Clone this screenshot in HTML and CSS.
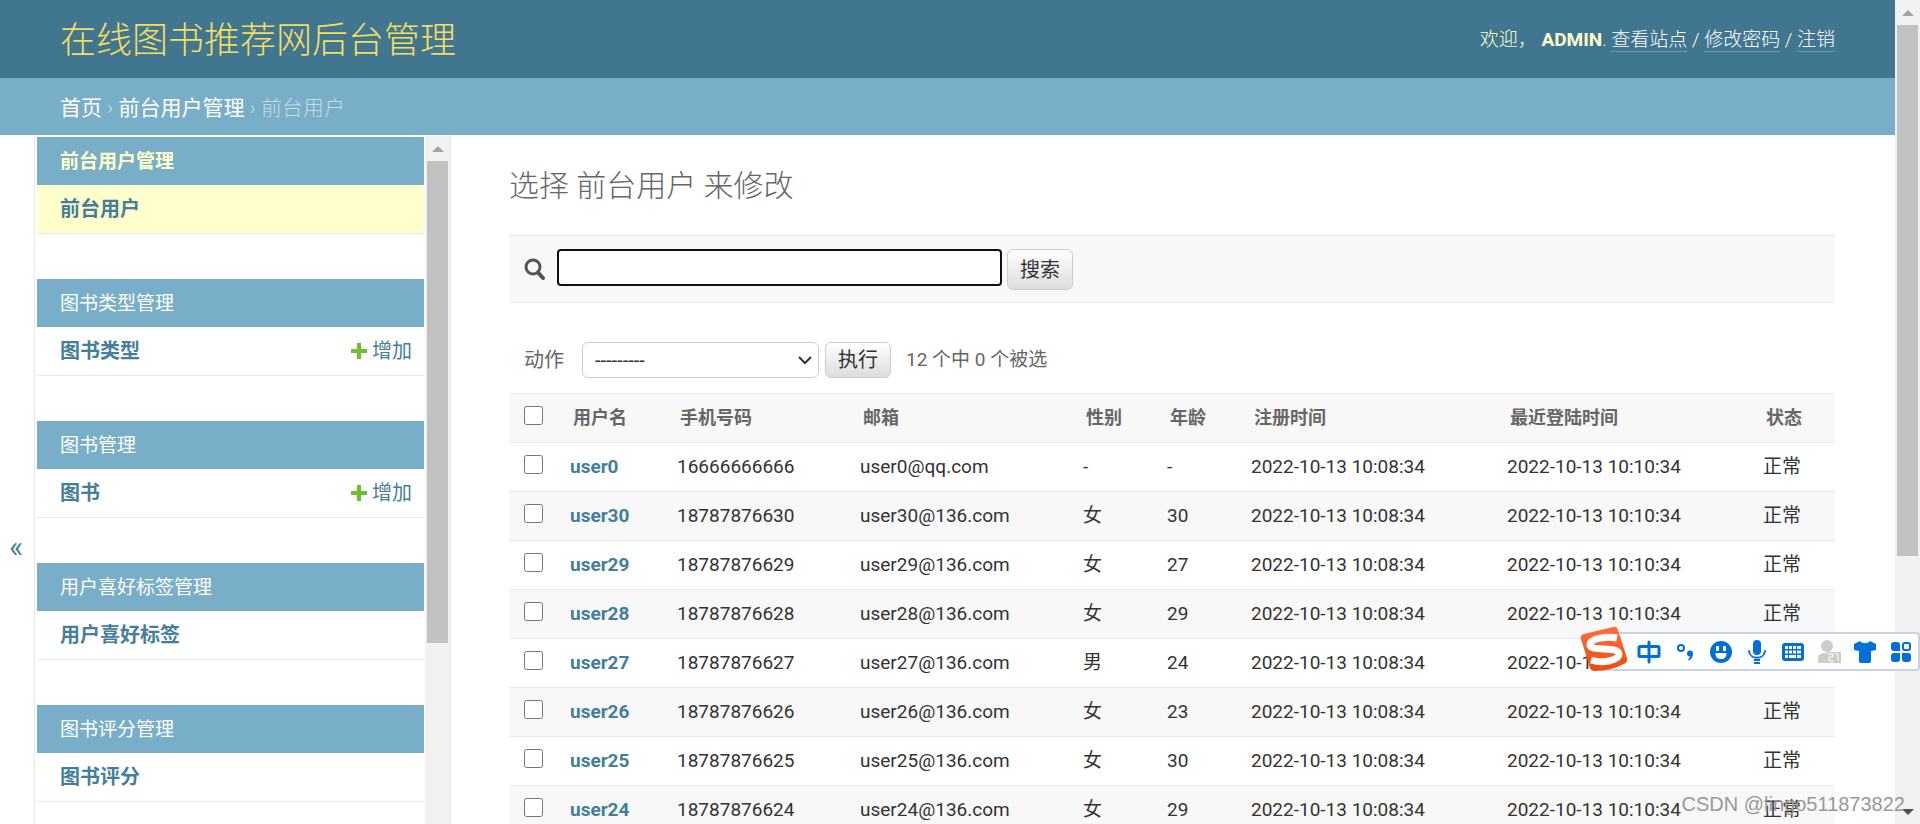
FILE: index.html
```html
<!DOCTYPE html>
<html lang="zh-CN">
<head>
<meta charset="utf-8">
<title>选择 前台用户 来修改 | 在线图书推荐网后台管理</title>
<link rel="stylesheet" href="styles.css">
</head>
<body>
<div class="page">
  <header class="header">
    <h1 class="branding"><a href="#">在线图书推荐网后台管理</a></h1>
    <div class="user-tools">欢迎， <strong>ADMIN</strong>. <a href="#">查看站点</a> / <a href="#">修改密码</a> / <a href="#">注销</a></div>
  </header>
  <nav class="breadcrumbs"><a href="#">首页</a> › <a href="#">前台用户管理</a> › 前台用户</nav>
  <div class="main">
    <button class="toggle" type="button" aria-label="切换导航">«</button>
    <nav class="sidebar">
      <div class="modules">
        <section class="module current">
          <h2><a href="#">前台用户管理</a></h2>
          <div class="model"><a class="name" href="#">前台用户</a></div>
        </section>
        <section class="module">
          <h2><a href="#">图书类型管理</a></h2>
          <div class="model"><a class="name" href="#">图书类型</a><a class="add" href="#"><svg viewBox="0 0 16 16"><path d="M6 0h4v6h6v4h-6v6H6v-6H0V6h6z"/></svg>增加</a></div>
        </section>
        <section class="module">
          <h2><a href="#">图书管理</a></h2>
          <div class="model"><a class="name" href="#">图书</a><a class="add" href="#"><svg viewBox="0 0 16 16"><path d="M6 0h4v6h6v4h-6v6H6v-6H0V6h6z"/></svg>增加</a></div>
        </section>
        <section class="module">
          <h2><a href="#">用户喜好标签管理</a></h2>
          <div class="model"><a class="name" href="#">用户喜好标签</a></div>
        </section>
        <section class="module">
          <h2><a href="#">图书评分管理</a></h2>
          <div class="model"><a class="name" href="#">图书评分</a></div>
        </section>
      </div>
      <div class="scrollbar side-scroll"><span class="arrow up"></span><span class="thumb"></span></div>
    </nav>
    <main class="content">
      <h2 class="title">选择 前台用户 来修改</h2>
      <form class="toolbar">
        <label for="searchbar" aria-label="搜索"><svg viewBox="0 0 21 22"><circle cx="9" cy="9" r="7" fill="none" stroke="#555" stroke-width="3"/><path d="M14 14.500l5 5.500" stroke="#555" stroke-width="4" stroke-linecap="round"/></svg></label>
        <input class="search" type="text" id="searchbar">
        <button class="btn" type="button">搜索</button>
      </form>
      <form class="changelist">
        <div class="actions">
          <label for="action">动作</label>
          <select id="action"><option>---------</option></select>
          <button class="btn" type="button">执行</button>
          <span class="counter">12 个中 0 个被选</span>
        </div>
        <table class="results">
          <colgroup><col class="c-check"><col class="c-user"><col class="c-phone"><col class="c-mail"><col class="c-small"><col class="c-small"><col class="c-time"><col class="c-time"><col class="c-small"></colgroup>
          <thead>
            <tr><th><input type="checkbox" aria-label="全选"></th><th>用户名</th><th>手机号码</th><th>邮箱</th><th>性别</th><th>年龄</th><th>注册时间</th><th>最近登陆时间</th><th>状态</th></tr>
          </thead>
          <tbody>
            <tr><td><input type="checkbox" aria-label="user0"></td><td><a href="#">user0</a></td><td>16666666666</td><td>user0@qq.com</td><td>-</td><td>-</td><td>2022-10-13 10:08:34</td><td>2022-10-13 10:10:34</td><td>正常</td></tr>
            <tr><td><input type="checkbox" aria-label="user30"></td><td><a href="#">user30</a></td><td>18787876630</td><td>user30@136.com</td><td>女</td><td>30</td><td>2022-10-13 10:08:34</td><td>2022-10-13 10:10:34</td><td>正常</td></tr>
            <tr><td><input type="checkbox" aria-label="user29"></td><td><a href="#">user29</a></td><td>18787876629</td><td>user29@136.com</td><td>女</td><td>27</td><td>2022-10-13 10:08:34</td><td>2022-10-13 10:10:34</td><td>正常</td></tr>
            <tr><td><input type="checkbox" aria-label="user28"></td><td><a href="#">user28</a></td><td>18787876628</td><td>user28@136.com</td><td>女</td><td>29</td><td>2022-10-13 10:08:34</td><td>2022-10-13 10:10:34</td><td>正常</td></tr>
            <tr><td><input type="checkbox" aria-label="user27"></td><td><a href="#">user27</a></td><td>18787876627</td><td>user27@136.com</td><td>男</td><td>24</td><td>2022-10-13 10:08:34</td><td>2022-10-13 10:10:34</td><td>正常</td></tr>
            <tr><td><input type="checkbox" aria-label="user26"></td><td><a href="#">user26</a></td><td>18787876626</td><td>user26@136.com</td><td>女</td><td>23</td><td>2022-10-13 10:08:34</td><td>2022-10-13 10:10:34</td><td>正常</td></tr>
            <tr><td><input type="checkbox" aria-label="user25"></td><td><a href="#">user25</a></td><td>18787876625</td><td>user25@136.com</td><td>女</td><td>30</td><td>2022-10-13 10:08:34</td><td>2022-10-13 10:10:34</td><td>正常</td></tr>
            <tr><td><input type="checkbox" aria-label="user24"></td><td><a href="#">user24</a></td><td>18787876624</td><td>user24@136.com</td><td>女</td><td>29</td><td>2022-10-13 10:08:34</td><td>2022-10-13 10:10:34</td><td>正常</td></tr>
          </tbody>
        </table>
      </form>
    </main>
  </div>
</div>
<div class="scrollbar page-scroll"><span class="arrow up"></span><span class="thumb"></span><span class="arrow down"></span></div>

<div class="ime">
  <svg class="ime-logo" viewBox="0 0 48 46">
    <defs><linearGradient id="orange" x1="0" y1="0" x2="0" y2="1"><stop offset="0" stop-color="#ff6f3d"/><stop offset="1" stop-color="#ef4a0c"/></linearGradient></defs>
    <path d="M4 8L33 1Q37 0 38 4L47 32Q48 36 44 38Q30 45 15 45Q11 45 10 42L1 13Q0 9 4 8z" fill="url(#orange)"/>
    <path d="M37 12C28 10 10 12 10 19C10 26 39 20 39 28C39 34 24 38 11 34" fill="none" stroke="#fff" stroke-width="7"/>
  </svg>
  <svg viewBox="0 0 24 24"><path d="M3 6.500h18a1 1 0 0 1 1 1v8a1 1 0 0 1-1 1H3a1 1 0 0 1-1-1v-8a1 1 0 0 1 1-1zM12 2v20" fill="none" stroke="#006fdc" stroke-width="3" stroke-linecap="round"/></svg>
  <svg viewBox="0 0 24 24"><circle cx="8" cy="8" r="3" fill="none" stroke="#006fdc" stroke-width="2"/><path d="M17 10.500a3 3 0 0 1 3 3c0 3-1 5-4 7l-1-1c1-1 2-2 2-3a3 3 0 0 1 0-6z" fill="#006fdc"/></svg>
  <svg viewBox="0 0 24 24"><circle cx="12" cy="12" r="11" fill="#006fdc"/><path d="M6.500 13h11c0 4-2 6-5.500 6s-5.500-2-5.500-6z" fill="#fff"/><rect x="7" y="6" width="3" height="5" rx="1" fill="#fff"/><rect x="14" y="6" width="3" height="5" rx="1" fill="#fff"/></svg>
  <svg viewBox="0 0 24 24"><rect x="8" y="0" width="8" height="15" rx="4" fill="#006fdc"/><path d="M4 11c1 9 15 9 16 0" fill="none" stroke="#006fdc" stroke-width="2" stroke-linecap="round"/><path d="M9 20h6M9 23h6" stroke="#006fdc" stroke-width="2"/></svg>
  <svg viewBox="0 0 24 24"><rect x="1" y="3" width="22" height="18" rx="3" fill="#006fdc"/><path d="M4 6h3v3H4zM8 6h3v3H8zM12 6h3v3h-3zM16 6h4v3h-4zM4 10.500h3v3H4zM8 10.500h3v3H8zM12 10.500h3v3h-3zM16 10.500h4v3h-4zM4 15h3v3H4zM8 15h7v3H8zM16 15h4v3h-4z" fill="#fff"/></svg>
  <svg viewBox="0 0 24 24"><circle cx="10" cy="6" r="6" fill="#ccc"/><path d="M1 23v-4q0-5 5-6h7q5 1 5 6v4z" fill="#ccc"/><path d="M10 12h14v11H10z" fill="#ccc"/><path d="M11 14h5v3h-4v4h5M18 14h3v7" fill="none" stroke="#fff" stroke-width="1"/></svg>
  <svg viewBox="0 0 24 24"><path d="M7 1c2 3 8 3 10 0l6 3v6l-5 1v10q0 2-2 2H8q-2 0-2-2V11l-5-1V4z" fill="#006fdc"/></svg>
  <svg viewBox="0 0 24 24"><path d="M5 2h3q3 0 3 3v6H5q-3 0-3-3V5q0-3 3-3zM2 16q0-3 3-3h6v6q0 3-3 3H5q-3 0-3-3zM13 13h6q3 0 3 3v3q0 3-3 3h-3q-3 0-3-3z" fill="#006fdc"/><rect x="14" y="3" width="7" height="7" rx="2" fill="none" stroke="#006fdc" stroke-width="2"/></svg>
</div>
<div class="watermark">CSDN @lingo511873822</div>
</body>
</html>
```
FILE: styles.css
```css
* { box-sizing: border-box; }

body {
  display: flex;
  height: 100vh;
  margin: 0;
  overflow: hidden;
  background: #fff;
  color: #333;
  font-family: Roboto, "Noto Sans CJK SC", sans-serif;
  font-size: 19px;
  line-height: 24px;
}

a { color: #447e9b; text-decoration: none; }
h1, h2 { margin: 0; }
button, input, select { font: inherit; margin: 0; }

.page {
  display: flex;
  flex: 1;
  flex-direction: column;
  min-width: 0;
}

/* header */
.header {
  display: flex;
  align-items: center;
  justify-content: space-between;
  flex: none;
  height: 78px;
  padding: 4px 60px 0;
  background: #417690;
  color: #ffc;
}
.branding { font-size: 36px; font-weight: 300; line-height: 48px; }
.branding a { color: #f5dd5d; }
.user-tools { padding-bottom: 3px; font-weight: 300; }
.user-tools strong { font-weight: 700; }
.user-tools a { color: #fff; border-bottom: 1px solid #7097aa; }

.breadcrumbs {
  flex: none;
  height: 57px;
  padding: 16px 60px 13px;
  background: #79aec8;
  color: #c4dce8;
  font-size: 21px;
  font-weight: 300;
  line-height: 28px;
}
.breadcrumbs a { color: #fff; font-weight: 400; }

.main { display: flex; flex: 1; min-height: 0; }

/* side navigation */
.toggle {
  flex: none;
  width: 35px;
  padding: 134px 2px 0 0;
  border: 0;
  border-right: 1px solid #eaeaea;
  background: #fff;
  color: #447e9b;
  font-size: 30px;
}
.sidebar {
  display: flex;
  flex: none;
  width: 416px;
  border-right: 1px solid #eaeaea;
  overflow: hidden;
}
.modules { flex: 1; padding: 2px 1px 0 2px; }
.module { margin-bottom: 45px; }
.module h2 {
  padding: 13px 23px 11px;
  background: #79aec8;
  font-size: 19px;
  font-weight: 400;
  line-height: 24px;
}
.module h2 a { color: #fff; }
.model {
  display: flex;
  align-items: center;
  justify-content: space-between;
  padding: 12px 12px 12px 23px;
  border-bottom: 1px solid #eaeaea;
  font-size: 20px;
}
.model .name { font-weight: 700; }
.add { display: flex; align-items: center; gap: 5px; }
.add svg { width: 16px; height: 16px; fill: #70bf2b; }
.current h2 { font-weight: 700; }
.current h2 a { color: #ffc; }
.current .model { background: #ffc; }

/* scroll bars */
.scrollbar {
  display: flex;
  flex: none;
  flex-direction: column;
  align-items: center;
  width: 25px;
  background: #f1f1f1;
}
.side-scroll { margin-top: 1px; }
.arrow { flex: none; height: 25px; display: flex; align-items: center; }
.arrow::before { content: ""; border: 6px solid transparent; }
.up::before { border-top: 0; border-bottom-color: #a3a3a3; }
.down::before { border-bottom: 0; border-top-color: #505050; }
.down { margin-top: auto; }
.thumb { width: 21px; background: #c1c1c1; }
.side-scroll .thumb { height: 70%; }
.page-scroll .thumb { height: 531px; }

/* change list */
.content { flex: 1; min-width: 0; padding: 31px 60px 0 58px; overflow: hidden; }
.title {
  margin-bottom: 29px;
  color: #666;
  font-size: 30px;
  font-weight: 300;
  line-height: 40px;
}
.toolbar {
  display: flex;
  align-items: flex-start;
  gap: 5px;
  height: 68px;
  padding: 13px 15px;
  border-top: 1px solid #eaeaea;
  border-bottom: 1px solid #eaeaea;
  background: #f8f8f8;
}
.toolbar label { width: 28px; padding-top: 9px; }
.toolbar svg { display: block; width: 21px; height: 22px; }
.search {
  width: 445px;
  height: 37px;
  padding: 4px 8px;
  border: 2px solid #101010;
  border-radius: 4px;
  background: #fff;
  outline: 0;
}
.btn {
  height: 41px;
  padding: 0 12px;
  border: 1px solid #ccc;
  border-radius: 6px;
  background: linear-gradient(#fff, #ddd);
  color: #333;
  font-size: 20px;
}
.actions {
  display: flex;
  align-items: center;
  margin: 30px 0 6px;
  padding: 9px 15px;
  color: #666;
  font-size: 20px;
}
.actions select {
  appearance: none;
  width: 237px;
  height: 36px;
  margin: 0 6px 0 18px;
  padding: 0 12px;
  border: 1px solid #ccc;
  border-radius: 6px;
  background: #fff url("data:image/svg+xml,%3Csvg xmlns='http://www.w3.org/2000/svg' width='14' height='10'%3E%3Cpath d='M1 2l6 6 6-6' fill='none' stroke='%23333' stroke-width='2'/%3E%3C/svg%3E") no-repeat right 6px center;
  color: #333;
}
.actions .btn { height: 36px; margin-right: 15px; }
.counter { font-size: 19px; }

.results { width: 100%; border-collapse: collapse; table-layout: fixed; }
.c-check { width: 49px; }
.c-user { width: 107px; }
.c-phone { width: 183px; }
.c-mail { width: 223px; }
.c-small { width: 84px; }
.c-time { width: 256px; }
.results th, .results td {
  height: 49px;
  padding: 12px 0 12px 12px;
  border-bottom: 1px solid #eaeaea;
  text-align: left;
  vertical-align: top;
  white-space: nowrap;
}
.results td:first-child, .results th:first-child { padding-left: 15px; }
.results th {
  padding-left: 15px;
  border-top: 1px solid #eaeaea;
  background: #f8f8f8;
  color: #666;
  font-size: 18px;
  font-weight: 700;
}
.results tbody tr:nth-child(even) { background: #f8f8f8; }
.results td a { font-weight: 700; }
.results input { display: block; width: 19px; height: 19px; }

/* floating input method bar */
.ime {
  position: absolute;
  top: 632px;
  right: 0;
  display: flex;
  align-items: center;
  gap: 12px;
  height: 39px;
  padding: 0 5px 0 36px;
  border: 2px solid #c6d3e6;
  border-radius: 4px;
  background: #fff;
}
.ime svg { width: 24px; height: 24px; }
.ime .ime-logo { position: absolute; top: -8px; left: -21px; width: 48px; height: 46px; }

.watermark {
  position: absolute;
  right: 15px;
  bottom: 8px;
  color: #999;
  font-family: "Liberation Sans", Arial, sans-serif;
  font-size: 20px;
}
```
